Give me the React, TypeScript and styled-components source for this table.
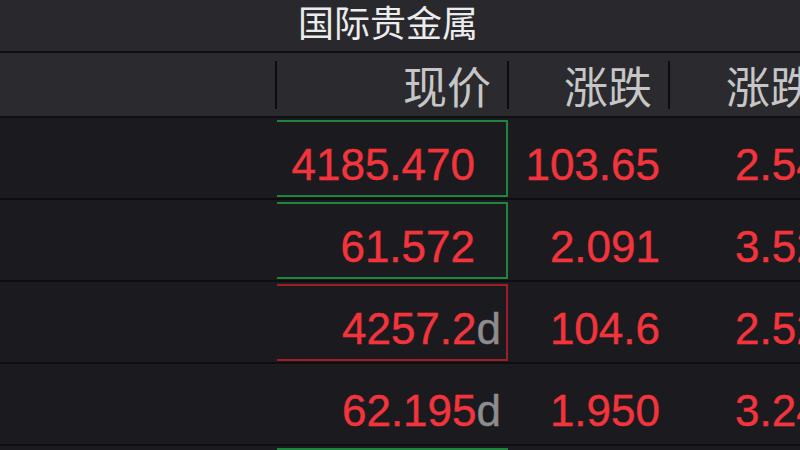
import React from "react";
import styled, { createGlobalStyle } from "styled-components";

const Global = createGlobalStyle`
  html, body { margin: 0; padding: 0; background: #1b1b1f; overflow: hidden; }
  body { width: 800px; height: 450px; }
`;

const Screen = styled.div`
  width: 800px;
  height: 450px;
  overflow: hidden;
  background: #1b1b1f;
  font-family: "Liberation Sans", Arial, "Noto Sans CJK SC", sans-serif;
`;

const TitleBar = styled.div`
  height: 51px;
  background: #28282d;
  border-bottom: 2px solid #101012;
  display: flex;
  align-items: flex-start;
  justify-content: center;
  padding-right: 24px;
`;

const Title = styled.div`
  font-family: "Noto Sans CJK SC", "Noto Sans", sans-serif;
  font-size: 36px;
  line-height: 42px;
  color: #ececec;
`;

const Grid = styled.div`
  display: grid;
  grid-template-columns: 277px 232px 161px 200px;
`;

const HeaderRow = styled(Grid)`
  height: 63px;
  background: #2a2a2f;
  border-bottom: 2px solid #101012;
`;

const HeadCell = styled.div<{ $sep?: boolean; $left?: boolean }>`
  display: flex;
  align-items: center;
  justify-content: ${(p) => (p.$left ? "flex-start" : "flex-end")};
  padding: 0 ${(p) => (p.$left ? 0 : 16)}px 0 ${(p) => (p.$left ? 56 : 0)}px;
  border-right: ${(p) => (p.$sep ? "2px solid #0c0c0e" : "none")};
  margin: 8px 0 7px;
  font-family: "Noto Sans CJK SC", "Noto Sans", sans-serif;
  font-size: 44px;
  line-height: 48px;
  color: #c6c6c6;
  white-space: nowrap;
`;

const Row = styled(Grid)`
  height: 80px;
  border-bottom: 2px solid #0e0e10;
  background: #1b1b1f;
`;

const Empty = styled.div``;

const frameColor = (f?: "up" | "down") =>
  f === "up" ? "#1c873c" : f === "down" ? "#9a1f27" : "transparent";

const PriceCell = styled.div<{ $frame?: "up" | "down" }>`
  margin: 2px 1px 1px 0;
  border-top: 2px solid ${(p) => frameColor(p.$frame)};
  border-right: 2px solid ${(p) => frameColor(p.$frame)};
  border-bottom: 2px solid ${(p) => frameColor(p.$frame)};
  display: flex;
  justify-content: flex-end;
  align-items: flex-start;
  padding: 21px 31px 0 0;
`;

const Num = styled.div<{ $pad?: number; $left?: number }>`
  font-size: 44px;
  line-height: 1;
  color: #f3343c;
  -webkit-text-stroke: 0.4px #f3343c;
  display: flex;
  justify-content: ${(p) => (p.$left !== undefined ? "flex-start" : "flex-end")};
  align-items: flex-start;
  padding: 25px ${(p) => p.$pad ?? 0}px 0 ${(p) => p.$left ?? 0}px;
  white-space: nowrap;
`;

const Value = styled.span`
  font-size: 44px;
  line-height: 1;
  color: #f3343c;
  -webkit-text-stroke: 0.4px #f3343c;
  white-space: nowrap;
`;

const Suffix = styled.span`
  color: #8d8d8d;
  -webkit-text-stroke: 0.4px #8d8d8d;
  margin-right: -26px;
`;

type Item = { price: string; d?: boolean; frame?: "up" | "down"; chg: string; pct: string };

const rows: Item[] = [
  { price: "4185.470", frame: "up", chg: "103.65", pct: "2.54%" },
  { price: "61.572", frame: "up", chg: "2.091", pct: "3.52%" },
  { price: "4257.2", d: true, frame: "down", chg: "104.6", pct: "2.52%" },
  { price: "62.195", d: true, chg: "1.950", pct: "3.24%" },
  { price: "4190.120", frame: "up", chg: "100.20", pct: "2.45%" },
];

export default function App() {
  return (
    <Screen>
      <Global />
      <TitleBar>
        <Title>国际贵金属</Title>
      </TitleBar>
      <HeaderRow>
        <HeadCell $sep />
        <HeadCell $sep>现价</HeadCell>
        <HeadCell $sep>涨跌</HeadCell>
        <HeadCell $left>涨跌幅</HeadCell>
      </HeaderRow>
      {rows.map((r, i) => (
        <Row key={i}>
          <Empty />
          <PriceCell $frame={r.frame}>
            <Value>
              {r.price}
              {r.d && <Suffix>d</Suffix>}
            </Value>
          </PriceCell>
          <Num $pad={10}>{r.chg}</Num>
          <Num $left={65}>{r.pct}</Num>
        </Row>
      ))}
    </Screen>
  );
}
